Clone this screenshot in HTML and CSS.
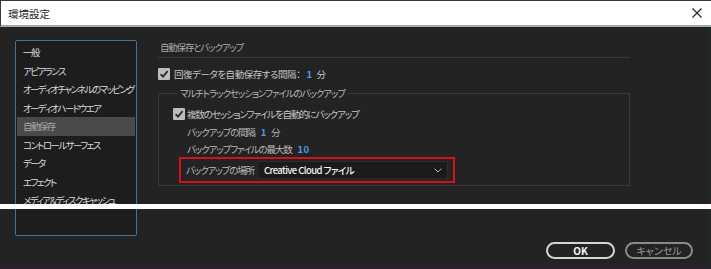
FILE: index.html
```html
<!DOCTYPE html>
<html lang="ja">
<head>
    <meta charset="UTF-8">
    <title>環境設定</title>
    <link rel="stylesheet" href="styles.css">
</head>
<body>
    <div class="window">
        <div class="titlebar">
            <span class="title">環境設定</span>
            <svg class="close" width="10" height="10" viewBox="0 0 10 10">
                <path d="M0.5 0.5 L9.5 9.5 M9.5 0.5 L0.5 9.5" stroke="#222" stroke-width="1.1" fill="none"/>
            </svg>
        </div>
        <div class="main">
            <ul class="nav">
                <li>一般</li>
                <li>アピアランス</li>
                <li>オーディオチャンネルのマッピング</li>
                <li>オーディオハードウエア</li>
                <li class="active">自動保存</li>
                <li>コントロールサーフェス</li>
                <li>データ</li>
                <li>エフェクト</li>
                <li>メディア＆ディスクキャッシュ</li>
            </ul>
            <div class="content">
                <div class="section-title">自動保存とバックアップ</div>
                <div class="check-row top">
                    <span class="checkbox"><svg width="12" height="12" viewBox="0 0 12 12"><path d="M2.6 6.2 L5 8.6 L9.6 3.2" stroke="#2a2a2a" stroke-width="1.8" fill="none"/></svg></span>
                    <span>回復データを自動保存する間隔：</span><b class="num num-gap">1</b><span>分</span>
                </div>
                <fieldset class="group">
                    <legend>マルチトラックセッションファイルのバックアップ</legend>
                    <div class="check-row">
                        <span class="checkbox"><svg width="12" height="12" viewBox="0 0 12 12"><path d="M2.6 6.2 L5 8.6 L9.6 3.2" stroke="#2a2a2a" stroke-width="1.8" fill="none"/></svg></span>
                        <span>複数のセッションファイルを自動的にバックアップ</span>
                    </div>
                    <div class="sub-row first">バックアップの間隔<b class="num">1</b>分</div>
                    <div class="sub-row">バックアップファイルの最大数<b class="num">10</b></div>
                    <div class="mark">
                        <span class="mark-label">バックアップの場所</span>
                        <div class="select">
                            <span>Creative Cloud ファイル</span>
                            <svg width="8" height="5" viewBox="0 0 8 5"><path d="M0.5 0.5 L4 4 L7.5 0.5" stroke="#aaa" stroke-width="1" fill="none"/></svg>
                        </div>
                    </div>
                </fieldset>
            </div>
        </div>
        <div class="footer">
            <span class="btn ok">OK</span>
            <span class="btn cancel">キャンセル</span>
        </div>
        <div class="cut"></div>
    </div>
</body>
</html>
```

FILE: styles.css
```css
* {
    padding: 0;
    margin: 0;
    box-sizing: border-box;
}
body {
    width: 711px;
    height: 269px;
    overflow: hidden;
    background-color: #232323;
    font-family: "Noto Sans CJK JP", "Liberation Sans", sans-serif;
    font-feature-settings: "palt";
    font-size: 9.5px;
    letter-spacing: -1.15px;
    color: #c6c6c6;
}
.window {
    position: relative;
    height: 269px;
}
.titlebar {
    height: 27px;
    background-color: #fff;
    border-top: 1px solid #3a3a3a;
    border-left: 1px solid #3a3a3a;
    border-bottom: 2px solid #a9a9a9;
    display: flex;
    align-items: center;
    justify-content: space-between;
    padding: 0 9px 0 7px;
}
.title {
    color: #1e1e1e;
    font-size: 10.5px;
    letter-spacing: 0;
}
.main {
    display: flex;
    height: 209px;
    padding: 13px 0 0 15px;
    border-right: 2px solid #1f2a27;
}
.nav {
    list-style: none;
    width: 122px;
    height: 196px;
    background-color: #1d1d1d;
    border: 1px solid #41729f;
    border-radius: 2px;
    padding: 2px 1px;
    overflow: hidden;
}
.nav li {
    height: 18.5px;
    line-height: 18.5px;
    padding-left: 6px;
    letter-spacing: -1.6px;
    color: #dadada;
    white-space: nowrap;
}
.nav li.active {
    background-color: #4a4a4a;
    color: #a6a6a6;
}
.content {
    width: 472px;
    margin-left: 21px;
}
.section-title {
    line-height: 14px;
    padding: 0 0 3px 2px;
    border-bottom: 1px solid #383838;
    letter-spacing: -1.2px;
    color: #a9a9a9;
}
.check-row {
    display: flex;
    align-items: center;
    height: 12px;
    line-height: 12px;
    margin-top: 10px;
    white-space: nowrap;
}
.check-row.top {
    letter-spacing: -0.45px;
}
.checkbox {
    width: 12px;
    height: 12px;
    background-color: #bdbdbd;
    border-radius: 1px;
    margin-right: 4px;
    display: flex;
}
.num {
    color: #4b97ec;
    font-weight: bold;
    letter-spacing: 0.5px;
    margin: 0 4px 0 6px;
}
.num-gap {
    margin-left: 6px;
}
.group {
    margin-top: 6px;
    border: 1px solid #383838;
    padding: 0 0 2px 14px;
}
.group legend {
    margin-left: 4px;
    padding: 0 3px;
    line-height: 14px;
    letter-spacing: -1.1px;
    color: #b3b3b3;
}
.group .check-row {
    margin-top: 8px;
}
.group .checkbox {
    margin-right: 2px;
}
.sub-row {
    line-height: 17px;
    padding-left: 14px;
    color: #b9b9b9;
}
.sub-row.first {
    margin-top: 4px;
}
.mark {
    display: flex;
    align-items: center;
    width: 276px;
    height: 26px;
    margin: -1px 0 0 6px;
    border: 2px solid #d2101e;
    padding: 0 5px;
    color: #b9b9b9;
}
.mark-label {
    white-space: nowrap;
    flex-shrink: 0;
}
.select {
    display: flex;
    align-items: center;
    justify-content: space-between;
    width: 191px;
    height: 18px;
    margin-left: auto;
    padding: 0 5px 0 6px;
    background-color: #1b1b1b;
    border: 1px solid #2c2c2c;
    color: #f2f2f2;
    font-weight: 500;
    letter-spacing: -0.6px;
    white-space: nowrap;
}
.footer {
    display: flex;
    justify-content: flex-end;
    height: 33px;
    padding: 6px 16px 0 0;
    border-right: 2px solid #1f2a27;
    border-bottom: 2px solid #2c2230;
}
.btn {
    height: 17px;
    line-height: 13px;
    border-radius: 9px;
    text-align: center;
    font-size: 10px;
    letter-spacing: 0;
}
.ok {
    width: 69px;
    border: 2px solid #d6d6d6;
    color: #f4f4f4;
    font-weight: bold;
}
.cancel {
    width: 68px;
    margin-left: 10px;
    border: 2px solid #8a8a8a;
    color: #9a9a9a;
}
.cut {
    position: absolute;
    left: 0;
    right: 0;
    top: 204px;
    height: 5px;
    background-color: #fff;
}
```
